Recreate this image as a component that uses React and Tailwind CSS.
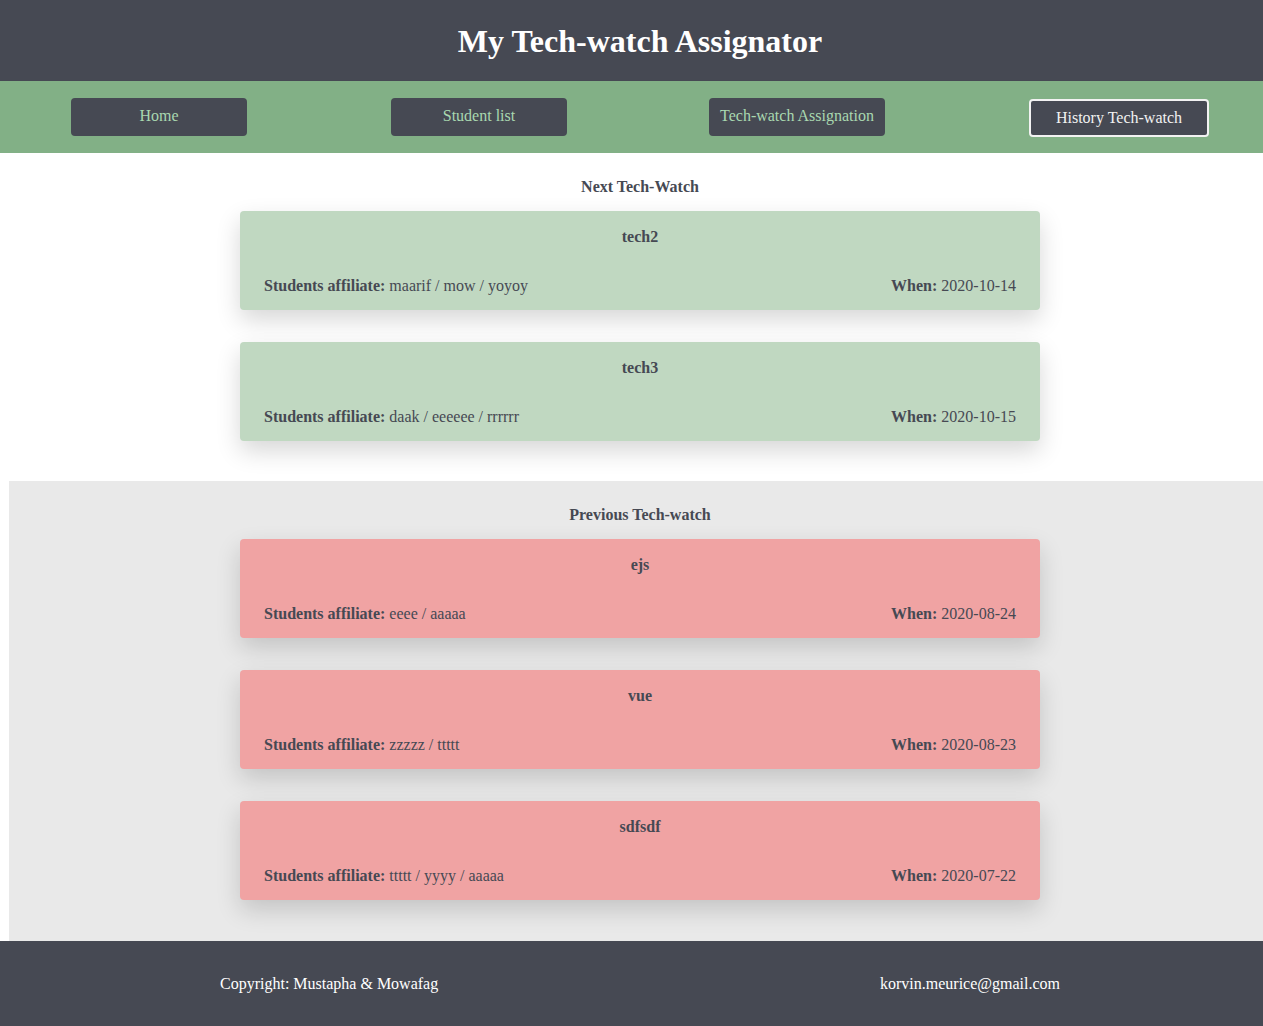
const nextWatches = [
  { title: "tech2", students: "maarif / mow / yoyoy", when: "2020-10-14" },
  { title: "tech3", students: "daak / eeeeee / rrrrrr", when: "2020-10-15" },
];

const previousWatches = [
  { title: "ejs", students: "eeee / aaaaa", when: "2020-08-24" },
  { title: "vue", students: "zzzzz / ttttt", when: "2020-08-23" },
  { title: "sdfsdf", students: "ttttt / yyyy / aaaaa", when: "2020-07-22" },
];

const WatchCard = ({ watch, color }) => (
  <div className={`w-[800px] h-[99px] rounded-[4px] px-6 pt-[16px] ${color} shadow-[0_10px_24px_rgba(0,0,0,0.16)]`}>
    <h3 className="text-center font-bold text-[16px] leading-5">{watch.title}</h3>
    <div className="flex justify-between mt-[29px] text-[16px] leading-5">
      <p><span className="font-bold">Students affiliate:</span> {watch.students}</p>
      <p><span className="font-bold">When:</span> {watch.when}</p>
    </div>
  </div>
);

const NavButton = ({ label, active }) => (
  <button
    className={
      active
        ? "w-[180px] h-[38px] mt-[1px] rounded-[4px] bg-[#464953] border-2 border-[#f2f2f2] text-[#f2f2f2] text-[16px]"
        : "w-[176px] h-[38px] rounded-[4px] bg-[#464953] text-[#a9d8b0] text-[16px] pb-[2px]"
    }
  >
    {label}
  </button>
);

export default function App() {
  return (
    <div className="w-full overflow-hidden">
      <div className="w-[1280px] bg-white text-[#464953] font-['Liberation_Serif',serif]">
        <header className="h-[81px] bg-[#464953] flex items-center justify-center">
          <h1 className="text-white font-bold text-[32px] leading-none">My Tech-watch Assignator</h1>
        </header>

        <nav className="h-[72px] bg-[#82b086] flex items-start pt-[17px] pl-[71px]">
          <NavButton label="Home" />
          <div className="ml-[144px]"><NavButton label="Student list" /></div>
          <div className="ml-[142px]"><NavButton label="Tech-watch Assignation" /></div>
          <div className="ml-[144px]"><NavButton label="History Tech-watch" active /></div>
        </nav>

        <section className="flex flex-col items-center pt-[24px] pb-[40px]">
          <h2 className="font-bold text-[16px] leading-5 mb-[14px]">Next Tech-Watch</h2>
          <div className="flex flex-col gap-[32px]">
            {nextWatches.map((w) => (
              <WatchCard key={w.title} watch={w} color="bg-[#c0d8c1]" />
            ))}
          </div>
        </section>

        <section className="mx-[9px] bg-[#e9e9e9] flex flex-col items-center pt-[24px] pb-[41px]">
          <h2 className="font-bold text-[16px] leading-5 mb-[14px]">Previous Tech-watch</h2>
          <div className="flex flex-col gap-[32px]">
            {previousWatches.map((w) => (
              <WatchCard key={w.title} watch={w} color="bg-[#f0a3a3]" />
            ))}
          </div>
        </section>

        <footer className="h-[85px] bg-[#464953] flex items-center pl-[220px] text-white text-[16px]">
          <p className="w-[660px]">Copyright: Mustapha &amp; Mowafag</p>
          <p>korvin.meurice@gmail.com</p>
        </footer>
      </div>
    </div>
  );
}
